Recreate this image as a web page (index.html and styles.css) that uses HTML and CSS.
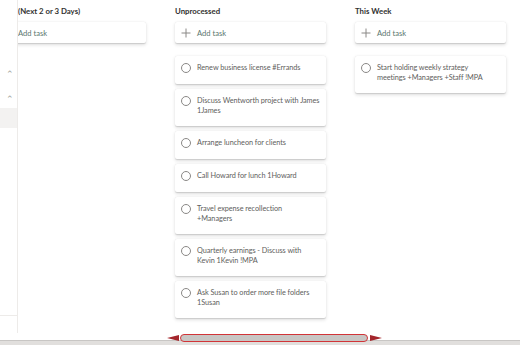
FILE: index.html
```html
<!DOCTYPE html>
<html lang="en">

<head>
    <meta charset="UTF-8">
    <title>Tasks Board</title>
    <link rel="stylesheet" href="styles.css">
</head>

<body>

<div class="app">
    <!-- Left rail -->
    <aside class="rail">
        <span class="chev">&#8963;</span>
        <span class="chev">&#8963;</span>
        <div class="rail-selected"></div>
        <div class="rail-spacer"></div>
        <div class="rail-line"></div>
    </aside>

    <!-- Board -->
    <main class="board">
        <section class="column first">
            <h3 class="col-title">(Next 2 or 3 Days)</h3>
            <div class="card add-card">
                <span>Add task</span>
            </div>
        </section>

        <section class="column">
            <h3 class="col-title">Unprocessed</h3>
            <div class="card add-card">
                <svg class="plus" width="10" height="10" viewBox="0 0 10 10"><path d="M5 0.5V9.5M0.5 5H9.5" stroke="#8a8886" stroke-width="1"/></svg>
                <span>Add task</span>
            </div>
            <div class="task-list">
                <div class="card task"><span class="circle"></span><p>Renew business license #Errands</p></div>
                <div class="card task"><span class="circle"></span><p>Discuss Wentworth project with James<br>1James</p></div>
                <div class="card task"><span class="circle"></span><p>Arrange luncheon for clients</p></div>
                <div class="card task"><span class="circle"></span><p>Call Howard for lunch 1Howard</p></div>
                <div class="card task"><span class="circle"></span><p>Travel expense recollection<br>+Managers</p></div>
                <div class="card task"><span class="circle"></span><p>Quarterly earnings - Discuss with<br>Kevin 1Kevin !MPA</p></div>
                <div class="card task"><span class="circle"></span><p>Ask Susan to order more file folders<br>1Susan</p></div>
            </div>
        </section>

        <section class="column">
            <h3 class="col-title">This Week</h3>
            <div class="card add-card">
                <svg class="plus" width="10" height="10" viewBox="0 0 10 10"><path d="M5 0.5V9.5M0.5 5H9.5" stroke="#8a8886" stroke-width="1"/></svg>
                <span>Add task</span>
            </div>
            <div class="task-list">
                <div class="card task"><span class="circle"></span><p>Start holding weekly strategy<br>meetings +Managers +Staff !MPA</p></div>
            </div>
        </section>
    </main>
</div>

<!-- Horizontal scrollbar -->
<div class="hscroll">
    <div class="track">
        <span class="arrow left"></span>
        <div class="thumb"></div>
        <span class="arrow right"></span>
    </div>
</div>

</body>

</html>
```

FILE: styles.css
```css
* {
    margin: 0;
    padding: 0;
    box-sizing: border-box;
}

body {
    font-family: "Segoe UI", Lato, sans-serif;
    background-color: #fff;
    width: 520px;
    height: 345px;
    overflow: hidden;
    color: #605e5c;
}

.app {
    display: flex;
    height: 333px;
}

.rail {
    width: 18px;
    flex-shrink: 0;
    border-right: 1px solid #edebe9;
    display: flex;
    flex-direction: column;
    align-items: center;
    padding-top: 68px;
}

.chev {
    font-size: 9px;
    line-height: 12px;
    color: #a19f9d;
    height: 12px;
    margin-bottom: 13px;
    padding-left: 3px;
}

.rail-selected {
    width: 100%;
    height: 20px;
    background-color: #f3f2f1;
    margin-top: -10px;
}

.rail-spacer {
    flex: 1;
}

.rail-line {
    width: 100%;
    height: 1px;
    background-color: #edebe9;
    margin-bottom: 17px;
}

.board {
    flex: 1;
    display: flex;
    gap: 29px;
    overflow: hidden;
    padding-top: 6px;
}

.column {
    width: 151px;
    flex-shrink: 0;
}

.column.first {
    margin-left: -23px;
}

.column.first .col-title {
    padding-left: 23px;
}

.column.first .add-card {
    padding-left: 23px;
}

.col-title {
    font-size: 7.8px;
    font-weight: 700;
    color: #323130;
    line-height: 11px;
    height: 16px;
}

.card {
    background-color: #fff;
    border-radius: 2px;
    box-shadow: 0 1.6px 3.6px rgba(0, 0, 0, 0.13), 0 0.3px 0.9px rgba(0, 0, 0, 0.11);
}

.add-card {
    height: 21px;
    display: flex;
    align-items: center;
    padding-left: 6px;
    font-size: 7.6px;
    color: #5b776f;
}

.plus {
    flex-shrink: 0;
    margin-right: 6px;
}

.task-list {
    display: flex;
    flex-direction: column;
    gap: 5px;
    margin-top: 13px;
}

.task {
    display: flex;
    align-items: flex-start;
    padding: 7px 2px 10px 6px;
    min-height: 28px;
}

.circle {
    width: 10px;
    height: 10px;
    border: 1px solid #8a8886;
    border-radius: 50%;
    flex-shrink: 0;
    margin-right: 6px;
}

.task p {
    font-size: 7.3px;
    letter-spacing: -0.05px;
    line-height: 10px;
    color: #605e5c;
    white-space: nowrap;
}

.hscroll {
    height: 12px;
    position: relative;
}

.track {
    display: flex;
    align-items: center;
    height: 9px;
    padding-left: 167px;
}

.thumb {
    width: 188px;
    height: 8px;
    background-color: #c8c6c4;
    border: 1px solid #d13438;
    border-radius: 4px;
}

.arrow {
    width: 0;
    height: 0;
    border-top: 3px solid transparent;
    border-bottom: 3px solid transparent;
}

.arrow.left {
    border-right: 12px solid #a4262c;
    margin-right: 1px;
}

.arrow.right {
    border-left: 12px solid #a4262c;
    margin-left: 2px;
}

.hscroll::after {
    content: "";
    position: absolute;
    left: 0;
    right: 0;
    bottom: 0;
    height: 4px;
    background-color: #e1dfdd;
    border-top: 1px solid #c8c6c4;
    z-index: -1;
}
```
